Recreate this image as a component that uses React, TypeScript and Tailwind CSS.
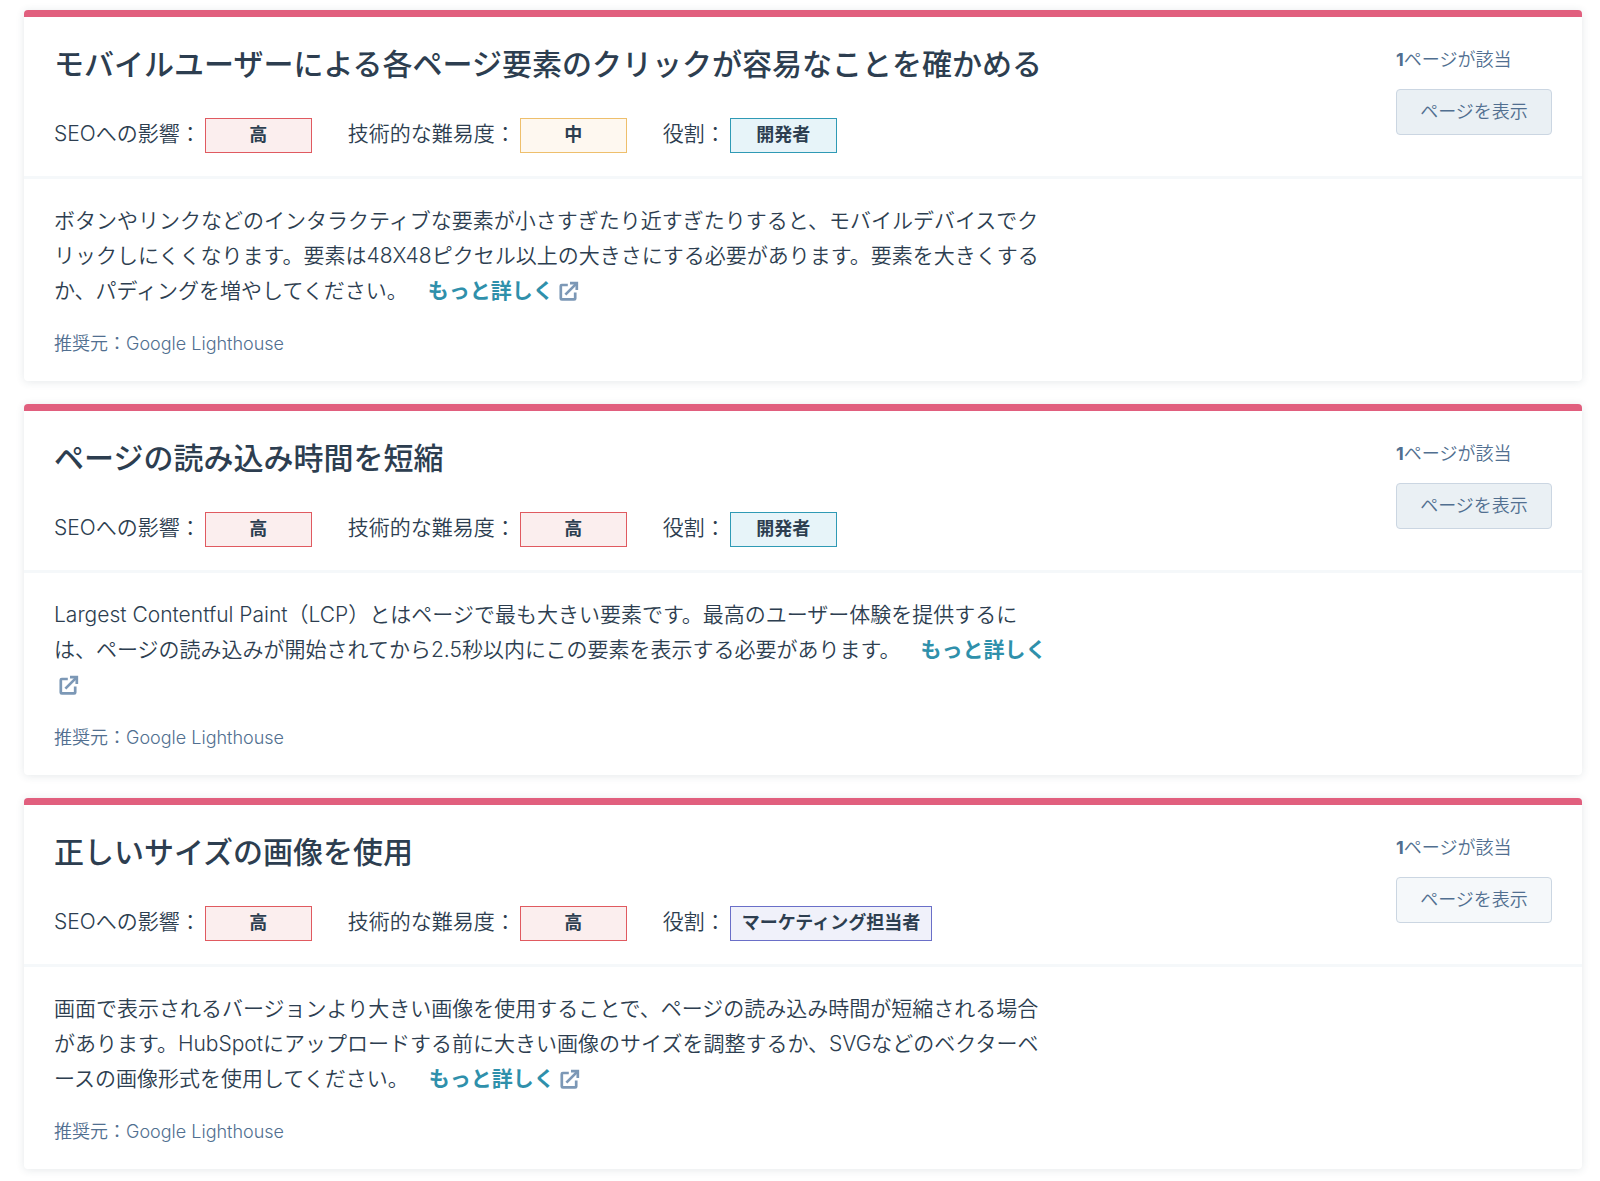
import React from "react";

type Tone = "red" | "amber" | "teal" | "violet";

type Issue = {
  title: string;
  difficulty: { label: string; tone: Tone };
  role: { label: string; tone: Tone };
  body: string;
  hovered: boolean;
};

const tones: Record<Tone, string> = {
  red: "border-[#e05a60] bg-[#fbeeee]",
  amber: "border-[#eebf6c] bg-[#fef8f0]",
  teal: "border-[#2f9ab5] bg-[#e7f4f9]",
  violet: "border-[#6a6fc8] bg-[#f0f1fa]",
};

const issues: Issue[] = [
  {
    title: "モバイルユーザーによる各ページ要素のクリックが容易なことを確かめる",
    difficulty: { label: "中", tone: "amber" },
    role: { label: "開発者", tone: "teal" },
    body: "ボタンやリンクなどのインタラクティブな要素が小さすぎたり近すぎたりすると、モバイルデバイスでクリックしにくくなります。要素は48X48ピクセル以上の大きさにする必要があります。要素を大きくするか、パディングを増やしてください。",
    hovered: true,
  },
  {
    title: "ページの読み込み時間を短縮",
    difficulty: { label: "高", tone: "red" },
    role: { label: "開発者", tone: "teal" },
    body: "Largest Contentful Paint（LCP）とはページで最も大きい要素です。最高のユーザー体験を提供するには、ページの読み込みが開始されてから2.5秒以内にこの要素を表示する必要があります。",
    hovered: true,
  },
  {
    title: "正しいサイズの画像を使用",
    difficulty: { label: "高", tone: "red" },
    role: { label: "マーケティング担当者", tone: "violet" },
    body: "画面で表示されるバージョンより大きい画像を使用することで、ページの読み込み時間が短縮される場合があります。HubSpotにアップロードする前に大きい画像のサイズを調整するか、SVGなどのベクターベースの画像形式を使用してください。",
    hovered: false,
  },
];

function Field({ name, label, tone }: { name: string; label: string; tone: Tone }) {
  return (
    <div className="flex items-start gap-1">
      <dt className="text-[21px] leading-8 font-[350] whitespace-nowrap">{name}：</dt>
      <dd
        className={`flex h-[35px] min-w-[107px] items-center justify-center border px-[11px] pb-[2px] text-[18px] font-bold whitespace-nowrap ${tones[tone]}`}
      >
        {label}
      </dd>
    </div>
  );
}

function ExternalIcon() {
  return (
    <svg
      viewBox="0 0 20 20"
      className="ml-[5px] inline-block size-5 align-[-3px] text-[#7c98b6]"
      fill="none"
      stroke="currentColor"
      strokeWidth="2.7"
      strokeLinejoin="round"
      aria-hidden="true"
    >
      <path d="M8.8 4H2.8a1 1 0 0 0-1 1v12.4a1 1 0 0 0 1 1h12.4a1 1 0 0 0 1-1v-6" />
      <path d="M6.4 13.6 17.6 2.4" />
      <path d="M11 2.2h6.8V9" strokeLinejoin="miter" />
    </svg>
  );
}

function IssueCard({ issue }: { issue: Issue }) {
  return (
    <article className="rounded-[4px] border-t-[7px] border-[#e15f7e] bg-white shadow-[0_1px_8px_rgba(45,62,80,0.12)]">
      <header className="flex items-start justify-between gap-8 border-b-[3px] border-[#f5f8fa] px-[30px] pt-[25px] pb-[23px]">
        <div>
          <h2 className="text-[30px] leading-[44px] font-medium">{issue.title}</h2>
          <dl className="mt-8 flex flex-wrap gap-x-9 gap-y-2">
            <Field name="SEOへの影響" label="高" tone="red" />
            <Field name="技術的な難易度" {...issue.difficulty} />
            <Field name="役割" {...issue.role} />
          </dl>
        </div>
        <div className="w-[156px] shrink-0 pt-1 text-[18px] font-[350] text-[#516f90]">
          <p className="leading-7">
            <strong className="font-bold">1</strong>ページが該当
          </p>
          <button
            type="button"
            className={`mt-[15px] h-[46px] w-full rounded-[4px] border border-[#cbd6e2] pb-[2px] ${
              issue.hovered ? "bg-[#eaf0f4]" : "bg-[#f5f8fa]"
            }`}
          >
            ページを表示
          </button>
        </div>
      </header>
      <div className="px-[30px] pt-6 pb-[23px] font-[350]">
        <p className="max-w-[996px] text-[21px] leading-[35px]">
          {issue.body}
          <a href="#more" className="ml-5 font-bold text-[#2f90ab]">
            もっと詳しく
            <ExternalIcon />
          </a>
        </p>
        <p className="mt-[22px] text-[18px] leading-7 text-[#516f90]">推奨元：Google Lighthouse</p>
      </div>
    </article>
  );
}

export default function App() {
  return (
    <main
      lang="ja"
      className="flex min-h-screen flex-col gap-[23px] bg-white pt-[10px] pr-[18px] pb-3 pl-6 font-[Inter,'Noto_Sans_CJK_JP',sans-serif] text-[#2d3e50]"
    >
      {issues.map((issue) => (
        <IssueCard key={issue.title} issue={issue} />
      ))}
    </main>
  );
}
